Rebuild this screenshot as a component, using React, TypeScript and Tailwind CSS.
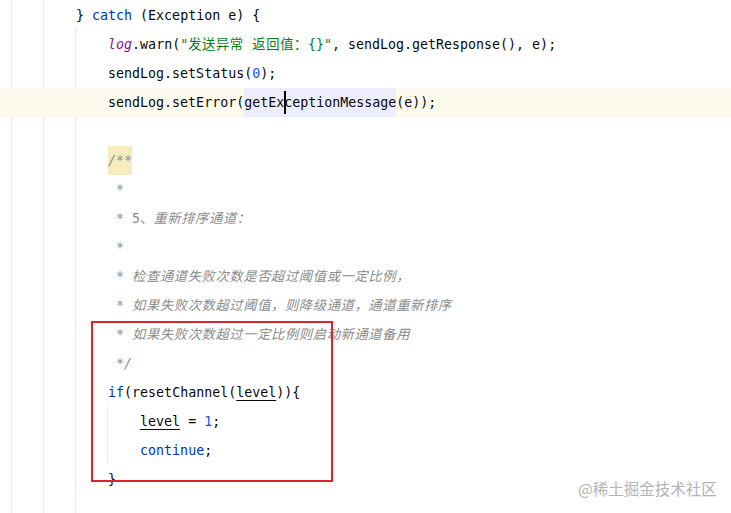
const mono = { fontFamily: '"DejaVu Sans Mono", "Noto Sans CJK SC", monospace' };

type Seg = { t: string; c?: string };

const K = "text-[#0033b3]";
const C = "text-[#8c8c8c] italic";
const CJ = "text-[#8c8c8c] italic tracking-[0.6px]";

function Line({ segs, className = "" }: { segs: Seg[]; className?: string }) {
  return (
    <div className={`h-[29px] flex items-center whitespace-pre pl-[12px] ${className}`}>
      {segs.map((s, i) => (
        <span key={i} className={s.c}>
          {s.t}
        </span>
      ))}
    </div>
  );
}

export default function App() {
  return (
    <div className="relative w-[731px] h-[513px] bg-white overflow-hidden text-[13.3px] text-[#080808]" style={mono}>
      {/* indent guides */}
      <div className="absolute left-[11px] top-0 bottom-0 w-px bg-[#e8e8e8]" />
      <div className="absolute left-[43px] top-0 bottom-0 w-px bg-[#e8e8e8]" />
      <div className="absolute left-[75px] top-[29px] bottom-0 w-px bg-[#e8e8e8]" />

      <div className="flex flex-col pt-px">
        <Line segs={[{ t: "        } " }, { t: "catch", c: K }, { t: " (Exception e) {" }]} />
        <Line
          segs={[
            { t: "            " },
            { t: "log", c: "text-[#871094] italic" },
            { t: ".warn(" },
            { t: '"', c: "text-[#067d17]" },
            { t: "发送异常 返回值：", c: "text-[#067d17] tracking-[0.6px]" },
            { t: '{}"', c: "text-[#067d17]" },
            { t: ", sendLog.getResponse(), e);" },
          ]}
        />
        <Line segs={[{ t: "            sendLog.setStatus(" }, { t: "0", c: "text-[#1750eb]" }, { t: ");" }]} />
        <div className="relative h-[29px] flex items-stretch whitespace-pre pl-[12px] bg-[#fcfaed]">
          <span className="flex items-center">{"            sendLog.setError("}</span>
          <span className="relative flex items-center bg-[#ededfc]">
            getExceptionMessage
            <span className="absolute left-[40px] top-[3px] h-[23px] w-[2px] bg-black" />
          </span>
          <span className="flex items-center">(e));</span>
        </div>
        <Line segs={[]} />
        <div className="h-[29px] flex items-stretch whitespace-pre pl-[12px]">
          <span>{"            "}</span>
          <span className="flex items-center bg-[#f6ecbd] text-[#8c8c8c] italic">/**</span>
        </div>
        <Line segs={[{ t: "             *", c: C }]} />
        <Line segs={[{ t: "             * ", c: C }, { t: "5、", c: "text-[#8c8c8c]" }, { t: "重新排序通道：", c: CJ }]} />
        <Line segs={[{ t: "             *", c: C }]} />
        <Line segs={[{ t: "             * ", c: C }, { t: "检查通道失败次数是否超过阈值或一定比例，", c: CJ }]} />
        <Line segs={[{ t: "             * ", c: C }, { t: "如果失败次数超过阈值，则降级通道，通道重新排序", c: CJ }]} />
        <Line segs={[{ t: "             * ", c: C }, { t: "如果失败次数超过一定比例则启动新通道备用", c: CJ }]} />
        <Line segs={[{ t: "             */", c: C }]} />
        <Line
          segs={[
            { t: "            " },
            { t: "if", c: K },
            { t: "(resetChannel(" },
            { t: "level", c: "underline underline-offset-[3px]" },
            { t: ")){" },
          ]}
        />
        <Line
          segs={[
            { t: "                " },
            { t: "level", c: "underline underline-offset-[3px]" },
            { t: " = " },
            { t: "1", c: "text-[#1750eb]" },
            { t: ";" },
          ]}
        />
        <Line segs={[{ t: "                " }, { t: "continue", c: K }, { t: ";" }]} />
        <Line segs={[{ t: "            }" }]} />
      </div>

      {/* if-block guide */}
      <div className="absolute left-[107px] top-[406px] h-[57px] w-px bg-[#e8e8e8]" />

      {/* red annotation box */}
      <div className="absolute left-[91px] top-[321px] w-[242px] h-[161px] border-2 border-[#d6262d]" />

      {/* watermark */}
      <div
        className="absolute left-[578px] top-[478px] text-[15.5px] leading-[20px] text-[#b3b3b3]"
        style={{ fontFamily: '"Noto Sans CJK SC", sans-serif' }}
      >
        @稀土掘金技术社区
      </div>
    </div>
  );
}
